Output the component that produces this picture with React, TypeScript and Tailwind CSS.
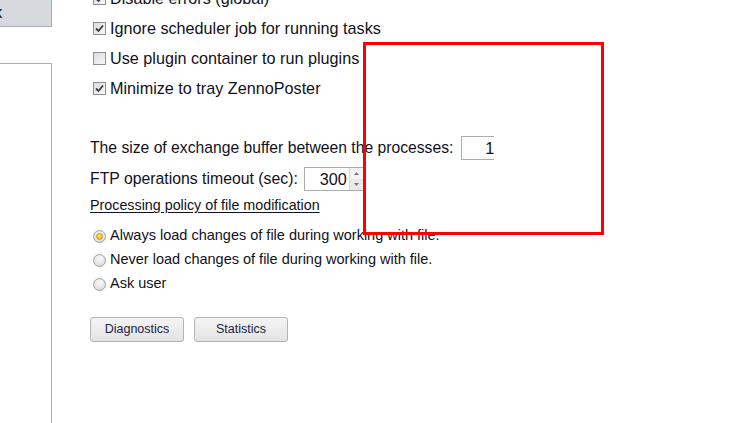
import React from "react";

const checks = [
  { label: "Disable errors (global)", on: true },
  { label: "Ignore scheduler job for running tasks", on: true },
  { label: "Use plugin container to run plugins", on: false },
  { label: "Minimize to tray ZennoPoster", on: true },
];

const radios = [
  { label: "Always load changes of file during working with file.", on: true },
  { label: "Never load changes of file during working with file.", on: false },
  { label: "Ask user", on: false },
];

function Check({ on }: { on: boolean }) {
  return (
    <div className="w-[13px] h-[13px] border border-[#8e8f8f] bg-[linear-gradient(135deg,#dcdcdc,#f7f7f7)] flex items-center justify-center shrink-0">
      {on && (
        <svg width="9" height="9" viewBox="0 0 9 9">
          <path d="M1 4.5 L3.5 7 L8 1.5" fill="none" stroke="#3a3a3a" strokeWidth="1.8" />
        </svg>
      )}
    </div>
  );
}

function Radio({ on }: { on: boolean }) {
  return (
    <div className="w-[13px] h-[13px] rounded-full border border-[#a2a2a2] bg-[radial-gradient(circle_at_50%_35%,#fafafa,#d4d4d4)] flex items-center justify-center shrink-0">
      {on && (
        <div className="w-[7px] h-[7px] rounded-full bg-[radial-gradient(circle_at_50%_30%,#ffe680,#f0a800)] border border-[#d69a00]" />
      )}
    </div>
  );
}

function Button({ children }: { children: React.ReactNode }) {
  return (
    <div className="w-[94px] h-[25px] rounded-[3px] border border-[#b4b4b4] bg-[linear-gradient(#f4f4f4,#e4e4e4)] flex items-center justify-center text-[12.5px] text-[#222244]">
      {children}
    </div>
  );
}

export default function App() {
  return (
    <div
      className="relative w-[730px] h-[423px] overflow-hidden bg-white flex text-[#111122]"
      style={{ fontFamily: "'Liberation Sans', Arial, sans-serif" }}>
      {/* left column */}
      <div className="w-[52px] flex flex-col shrink-0">
        <div className="h-[27px] overflow-hidden border-r border-b border-[#a9adb2] bg-[#d6dade]">
          <div className="-ml-[56px] w-[96px] h-full flex items-center justify-center text-[16px]">
            Ok
          </div>
        </div>
        <div className="mt-[36px] flex-1 border-t border-r border-[#adadb5]" />
      </div>

      {/* settings */}
      <div className="ml-[38px] flex flex-col text-[16.2px]">
        <div className="-mt-[17px] flex flex-col">
          {checks.map((c) => (
            <div key={c.label} className="h-[30px] flex items-center gap-[4px] pl-[3px]">
              <Check on={c.on} />
              <span>{c.label}</span>
            </div>
          ))}
        </div>

        <div className="mt-[33px] h-[24px] flex items-center gap-[8px]">
          <span className="text-[15.7px]">The size of exchange buffer between the processes:</span>
          <div className="w-[33px] h-[24px] border border-r-0 border-[#abadb3] flex items-center justify-end">
            1
          </div>
        </div>

        <div className="mt-[7px] h-[24px] flex items-center gap-[6px]">
          <span className="text-[15.8px]">FTP operations timeout (sec):</span>
          <div className="w-[60px] h-[24px] border border-[#abadb3] flex items-center">
            <span className="flex-1 text-right pr-[2px]">300</span>
            <div className="w-[14px] h-full flex flex-col border-l border-[#d8d8d8] bg-[#f4f4f4]">
              <div className="flex-1 flex items-center justify-center">
                <svg width="5" height="3" viewBox="0 0 5 3">
                  <path d="M0 3 L2.5 0 L5 3Z" fill="#777" />
                </svg>
              </div>
              <div className="flex-1 flex items-center justify-center bg-[#e8e8e8]">
                <svg width="5" height="3" viewBox="0 0 5 3">
                  <path d="M0 0 L2.5 3 L5 0Z" fill="#777" />
                </svg>
              </div>
            </div>
          </div>
        </div>

        <div className="mt-[6px] h-[18px] flex items-center text-[14.3px] underline underline-offset-2">
          Processing policy of file modification
        </div>

        <div className="mt-[9px] flex flex-col text-[14.5px]">
          {radios.map((r) => (
            <div key={r.label} className="h-[24px] flex items-center gap-[4px] pl-[3px]">
              <Radio on={r.on} />
              <span>{r.label}</span>
            </div>
          ))}
        </div>

        <div className="mt-[21px] flex gap-[10px]">
          <Button>Diagnostics</Button>
          <Button>Statistics</Button>
        </div>
      </div>

      {/* red annotation box */}
      <div className="absolute left-[363px] top-[42px] w-[241px] h-[193px] border-[3px] border-[#ff0000]" />
    </div>
  );
}
